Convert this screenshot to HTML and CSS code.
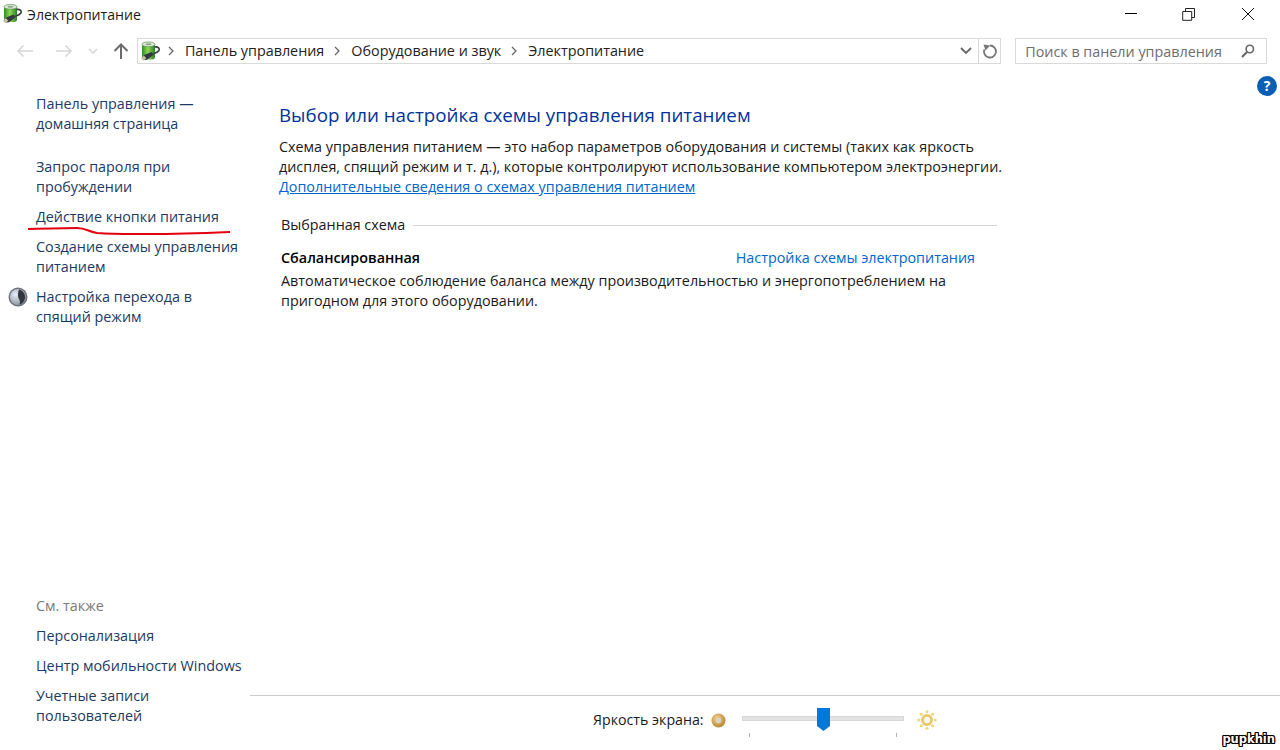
FILE: index.html
```html
<!DOCTYPE html>
<html lang="ru">
<head>
    <meta charset="UTF-8">
    <title>Электропитание</title>
    <link rel="stylesheet" href="styles.css">
</head>
<body>
<svg class="defs" width="0" height="0">
    <defs>
        <linearGradient id="batt" x1="0" x2="1" y1="0" y2="0">
            <stop offset="0" stop-color="#2f8a2c"/>
            <stop offset="0.45" stop-color="#8fd84f"/>
            <stop offset="1" stop-color="#2c7f2a"/>
        </linearGradient>
        <symbol id="battery" viewBox="0 0 20 20">
            <rect x="2" y="2" width="13" height="16" rx="3" fill="url(#batt)"/>
            <ellipse cx="8.500" cy="2.800" rx="6.500" ry="2.400" fill="#dfe9da" stroke="#5d8f58" stroke-width="0.7"/>
            <ellipse cx="8.500" cy="2.800" rx="3" ry="1" fill="#86a884"/>
            <path d="M14.500 5.500c4-.5 5.500 1.500 4.200 3.800-1.200 1.900-3.200 2.300-5.500 3" fill="none" stroke="#3a3f44" stroke-width="1.600"/>
            <path d="M4 13.500l7.500-3 2.200 2.800-6.700 5-3.500.2z" fill="#34393f"/>
            <path d="M1 16.500l3.200-2.200 2 2.500-3 2.500z" fill="#c9c2a4"/>
        </symbol>
    </defs>
</svg>

<div class="window">
    <div class="titlebar">
        <svg class="title-icon"><use href="#battery"/></svg>
        <span class="title-text">Электропитание</span>
        <div class="win-btns">
            <svg class="win-btn" viewBox="0 0 58 30"><path d="M22 13.500h12" stroke="#000" fill="none"/></svg>
            <svg class="win-btn" viewBox="0 0 58 30"><path d="M24.500 11.500h-2.800v8.800h9v-8.800h-8.700zM24.500 11.500v-3h9v9h-2.800" stroke="#222" fill="none"/></svg>
            <svg class="win-btn" viewBox="0 0 58 30"><path d="M23 8l12 12M35 8l-12 12" stroke="#111" fill="none"/></svg>
        </div>
    </div>

    <div class="navbar">
        <div class="nav-btns">
            <svg class="nav-arrow" viewBox="0 0 18 14"><path d="M17 7H2M7.500 1.500L2 7l5.500 5.500" fill="none" stroke="#d6d6d6" stroke-width="1.600"/></svg>
            <svg class="nav-arrow fwd" viewBox="0 0 18 14"><path d="M1 7h15M10.500 1.500L16 7l-5.500 5.500" fill="none" stroke="#d6d6d6" stroke-width="1.600"/></svg>
            <svg class="nav-drop" viewBox="0 0 10 6"><path d="M1 1l4 4 4-4" fill="none" stroke="#d6d6d6" stroke-width="1.500"/></svg>
            <svg class="nav-up" viewBox="0 0 16 16"><path d="M8 16V2M1.500 8L8 1.500 14.500 8" fill="none" stroke="#6b6b6b" stroke-width="2"/></svg>
        </div>
        <div class="address">
            <svg class="addr-icon"><use href="#battery"/></svg>
            <svg class="crumb-sep first" viewBox="0 0 6 10"><path d="M1 1l4 4-4 4" fill="none" stroke="#666" stroke-width="1.300"/></svg>
            <span class="crumb">Панель управления</span>
            <svg class="crumb-sep" viewBox="0 0 6 10"><path d="M1 1l4 4-4 4" fill="none" stroke="#666" stroke-width="1.300"/></svg>
            <span class="crumb">Оборудование и звук</span>
            <svg class="crumb-sep" viewBox="0 0 6 10"><path d="M1 1l4 4-4 4" fill="none" stroke="#666" stroke-width="1.300"/></svg>
            <span class="crumb">Электропитание</span>
            <svg class="addr-drop" viewBox="0 0 12 8"><path d="M1 1l5 5 5-5" fill="none" stroke="#666" stroke-width="1.800"/></svg>
            <div class="addr-refresh">
                <svg viewBox="0 0 16 16" width="16" height="16"><path d="M8 2.500a6 6 0 1 1-5.600 3.800" fill="none" stroke="#777" stroke-width="1.800"/><path d="M1.500 1.500l6.800 1-4.800 5z" fill="#777"/></svg>
            </div>
        </div>
        <div class="search">
            <span class="search-text">Поиск в панели управления</span>
            <svg class="search-icon" viewBox="0 0 14 14"><circle cx="8.800" cy="5" r="3.700" fill="none" stroke="#666" stroke-width="1.600"/><path d="M6 8l-5 5" stroke="#666" stroke-width="2.200"/></svg>
        </div>
    </div>

    <div class="body">
        <div class="sidebar">
            <div class="side-top">
                <a class="side-link first">Панель управления —<br>домашняя страница</a>
                <a class="side-link gap-big">Запрос пароля при<br>пробуждении</a>
                <a class="side-link">Действие кнопки питания</a>
                <a class="side-link">Создание схемы управления<br>питанием</a>
                <a class="side-link with-icon">
                    <svg class="moon" viewBox="0 0 20 20">
                        <defs><radialGradient id="moon" cx="0.35" cy="0.35" r="0.8"><stop offset="0" stop-color="#e8eef8"/><stop offset="1" stop-color="#7d8796"/></radialGradient></defs>
                        <circle cx="10" cy="10" r="9.500" fill="#6f747b"/>
                        <circle cx="10" cy="10" r="8" fill="url(#moon)"/>
                        <path d="M11 2.500c4 1 6.500 4.500 6 8.500-.5 3.500-3 6-5.500 6.500 1-3 .5-4-1-6.500-1-2-.5-6 .5-8.500z" fill="#33373d"/>
                    </svg>
                    <span>Настройка перехода в<br>спящий режим</span>
                </a>
            </div>
            <div class="side-bottom">
                <div class="side-head">См. также</div>
                <a class="side-link">Персонализация</a>
                <a class="side-link">Центр мобильности Windows</a>
                <a class="side-link">Учетные записи<br>пользователей</a>
            </div>
        </div>

        <div class="right">
            <div class="content">
                <div class="main">
                    <h1 class="heading">Выбор или настройка схемы управления питанием</h1>
                    <p class="intro">Схема управления питанием — это набор параметров оборудования и системы (таких как яркость<br>дисплея, спящий режим и т. д.), которые контролируют использование компьютером электроэнергии.<br><a class="more">Дополнительные сведения о схемах управления питанием</a></p>
                    <div class="group-head"><span>Выбранная схема</span><i></i></div>
                    <div class="plan-row">
                        <b class="plan-name">Сбалансированная</b>
                        <a class="plan-link">Настройка схемы электропитания</a>
                    </div>
                    <p class="plan-desc">Автоматическое соблюдение баланса между производительностью и энергопотреблением на<br>пригодном для этого оборудовании.</p>
                </div>
                <div class="help">?</div>
            </div>
            <div class="footer">
                <span class="bright-label">Яркость экрана:</span>
                <svg class="bright-low" viewBox="0 0 16 16">
                    <defs><radialGradient id="donut" cx="0.4" cy="0.35" r="0.75"><stop offset="0" stop-color="#f0d28a"/><stop offset="1" stop-color="#b07c2a"/></radialGradient></defs>
                    <circle cx="8" cy="8" r="7.500" fill="url(#donut)"/>
                    <circle cx="8" cy="8" r="3" fill="#d9d3c4"/>
                </svg>
                <div class="slider">
                    <div class="track"></div>
                    <svg class="thumb" viewBox="0 0 13 23"><path d="M0 0h13v18l-6.500 5L0 18z" fill="#0078d7"/></svg>
                    <div class="ticks"><i></i><i></i></div>
                </div>
                <svg class="bright-high" viewBox="0 0 22 22">
                    <g fill="#ecd879"><circle cx="11" cy="2" r="1.700"/><circle cx="11" cy="20" r="1.700"/><circle cx="2" cy="11" r="1.700"/><circle cx="20" cy="11" r="1.700"/><circle cx="4.700" cy="4.700" r="1.700"/><circle cx="17.300" cy="4.700" r="1.700"/><circle cx="4.700" cy="17.300" r="1.700"/><circle cx="17.300" cy="17.300" r="1.700"/></g>
                    <circle cx="11" cy="11" r="6.500" fill="#e6c965"/>
                    <circle cx="11" cy="11" r="3.500" fill="#f7f5ee"/>
                </svg>
            </div>
        </div>
    </div>
</div>

<!-- annotation drawn on top of the screenshot -->
<svg class="scribble" viewBox="0 0 205 10"><path d="M1 3c18-.5 37-1 49-1 9 0 12 4 20 5 20 1.500 35 1 53 1 30 0 55-1 80-2" fill="none" stroke="#e4000f" stroke-width="2"/></svg>
<div class="watermark">pupkhin</div>
</body>
</html>
```

FILE: styles.css
```css
* {
    box-sizing: border-box;
}
html, body {
    margin: 0;
    height: 750px;
    overflow: hidden;
    background: #fff;
}
body {
    font-family: "Open Sans", "Noto Sans", sans-serif;
    font-size: 14.35px;
    line-height: 20px;
    color: #1a1a1a;
}
.defs {
    position: absolute;
}
.window {
    height: 750px;
    display: flex;
    flex-direction: column;
}

/* title bar */
.titlebar {
    height: 30px;
    display: flex;
    align-items: center;
    padding-left: 2px;
}
.title-icon {
    width: 20px;
    height: 20px;
    margin-top: -2px;
}
.title-text {
    margin-left: 5px;
    font-size: 14.1px;
}
.win-btns {
    margin-left: auto;
    display: flex;
    margin-right: 3px;
}
.win-btn {
    width: 58px;
    height: 30px;
    display: block;
}

/* nav bar */
.navbar {
    height: 26px;
    margin-top: 8px;
    display: flex;
    align-items: center;
    padding-right: 13px;
}
.nav-btns {
    width: 137px;
    display: flex;
    align-items: center;
    padding-left: 16px;
}
.nav-arrow {
    width: 18px;
    height: 14px;
}
.nav-arrow.fwd {
    margin-left: 21px;
}
.nav-drop {
    width: 10px;
    height: 6px;
    margin-left: 15px;
}
.nav-up {
    width: 16px;
    height: 16px;
    margin-left: 15px;
}
.address {
    width: 865px;
    height: 26px;
    border: 1px solid #d9d9d9;
    display: flex;
    align-items: center;
    padding-left: 2px;
}
.addr-icon {
    width: 20px;
    height: 21px;
}
.crumb-sep {
    width: 6px;
    height: 10px;
    margin: 0 11px 0 10px;
}
.crumb-sep.first {
    margin-left: 8px;
    margin-right: 11px;
}
.crumb {
    color: #222;
}
.addr-drop {
    width: 12px;
    height: 8px;
    margin-left: auto;
    margin-right: 6px;
}
.addr-refresh {
    width: 22px;
    height: 24px;
    border-left: 1px solid #d9d9d9;
    display: flex;
    align-items: center;
    justify-content: center;
}
.search {
    width: 252px;
    height: 26px;
    margin-left: 14px;
    border: 1px solid #d9d9d9;
    display: flex;
    align-items: center;
    justify-content: space-between;
    padding: 0 11px 0 9px;
}
.search-text {
    color: #6d6d6d;
    margin-top: 2px;
}
.search-icon {
    width: 14px;
    height: 14px;
}

/* body */
.body {
    flex: 1;
    display: flex;
    min-height: 0;
}
.sidebar {
    width: 250px;
    flex: none;
    display: flex;
    flex-direction: column;
    justify-content: space-between;
    padding-top: 30px;
    padding-bottom: 24px;
}
.side-link {
    display: block;
    padding-left: 36px;
    margin-bottom: 10px;
    color: #1c3a63;
}
.side-link.gap-big {
    margin-top: 23px;
}
.side-link.with-icon {
    display: flex;
    padding-left: 8px;
}
.moon {
    width: 20px;
    height: 20px;
    margin-right: 8px;
    flex: none;
}
.side-bottom .side-link:last-child {
    margin-bottom: 0;
}
.side-head {
    padding-left: 36px;
    margin-bottom: 10px;
    color: #7a7a7a;
}

.right {
    flex: 1;
    display: flex;
    flex-direction: column;
    min-width: 0;
}
.content {
    flex: 1;
    display: flex;
    align-items: flex-start;
}
.main {
    width: 747px;
    padding-left: 29px;
    padding-top: 38px;
}
.heading {
    margin: 0;
    font-size: 18.75px;
    font-weight: 400;
    line-height: 26px;
    color: #003399;
}
.intro {
    margin: 9px 0 0;
    white-space: nowrap;
}
.more, .plan-link {
    color: #0066cc;
}
.more {
    text-decoration: underline;
}
.group-head {
    margin-top: 18px;
    padding-left: 2px;
    display: flex;
    align-items: center;
}
.group-head i {
    flex: 1;
    height: 1px;
    margin-left: 8px;
    background: #d4d4d4;
}
.plan-row {
    margin-top: 13px;
    padding-left: 2px;
    width: 696px;
    display: flex;
    justify-content: space-between;
}
.plan-name {
    color: #000;
    font-weight: 600;
}
.plan-desc {
    margin: 3px 0 0;
    padding-left: 2px;
}
.help {
    width: 20px;
    height: 20px;
    margin-left: 260px;
    margin-top: 12px;
    border-radius: 50%;
    background: #0a5fb4;
    color: #fff;
    font-weight: 700;
    font-size: 14px;
    text-align: center;
}

/* footer */
.footer {
    height: 55px;
    flex: none;
    border-top: 1px solid #cccccc;
    display: flex;
    align-items: center;
    padding-left: 343px;
    padding-bottom: 6px;
}
.bright-label {
    font-size: 14.2px;
}
.bright-low {
    width: 15px;
    height: 15px;
    margin-left: 7px;
}
.slider {
    width: 162px;
    margin-left: 16px;
    height: 30px;
    position: relative;
}
.track {
    height: 5px;
    margin-top: 11px;
    background: #e3e3e3;
    border: 1px solid #d6d6d6;
}
.thumb {
    position: absolute;
    left: 75px;
    top: 3px;
    width: 13px;
    height: 23px;
}
.ticks {
    display: flex;
    justify-content: space-between;
    padding: 0 7px;
    margin-top: 12px;
}
.ticks i {
    width: 1px;
    height: 4px;
    background: #b5b5b5;
}
.bright-high {
    width: 20px;
    height: 20px;
    margin-left: 13px;
}

/* overlays */
.scribble {
    position: absolute;
    left: 27px;
    top: 226px;
    width: 205px;
    height: 10px;
}
.watermark {
    position: absolute;
    right: 5px;
    bottom: 4px;
    font-family: "DejaVu Sans", sans-serif;
    font-weight: 700;
    font-size: 11.5px;
    line-height: 13px;
    color: #fff;
    text-shadow: 1px 0 0 #000, -1px 0 0 #000, 0 1px 0 #000, 0 -1px 0 #000, 1px 1px 0 #000, -1px -1px 0 #000, 1px -1px 0 #000, -1px 1px 0 #000;
}
```
